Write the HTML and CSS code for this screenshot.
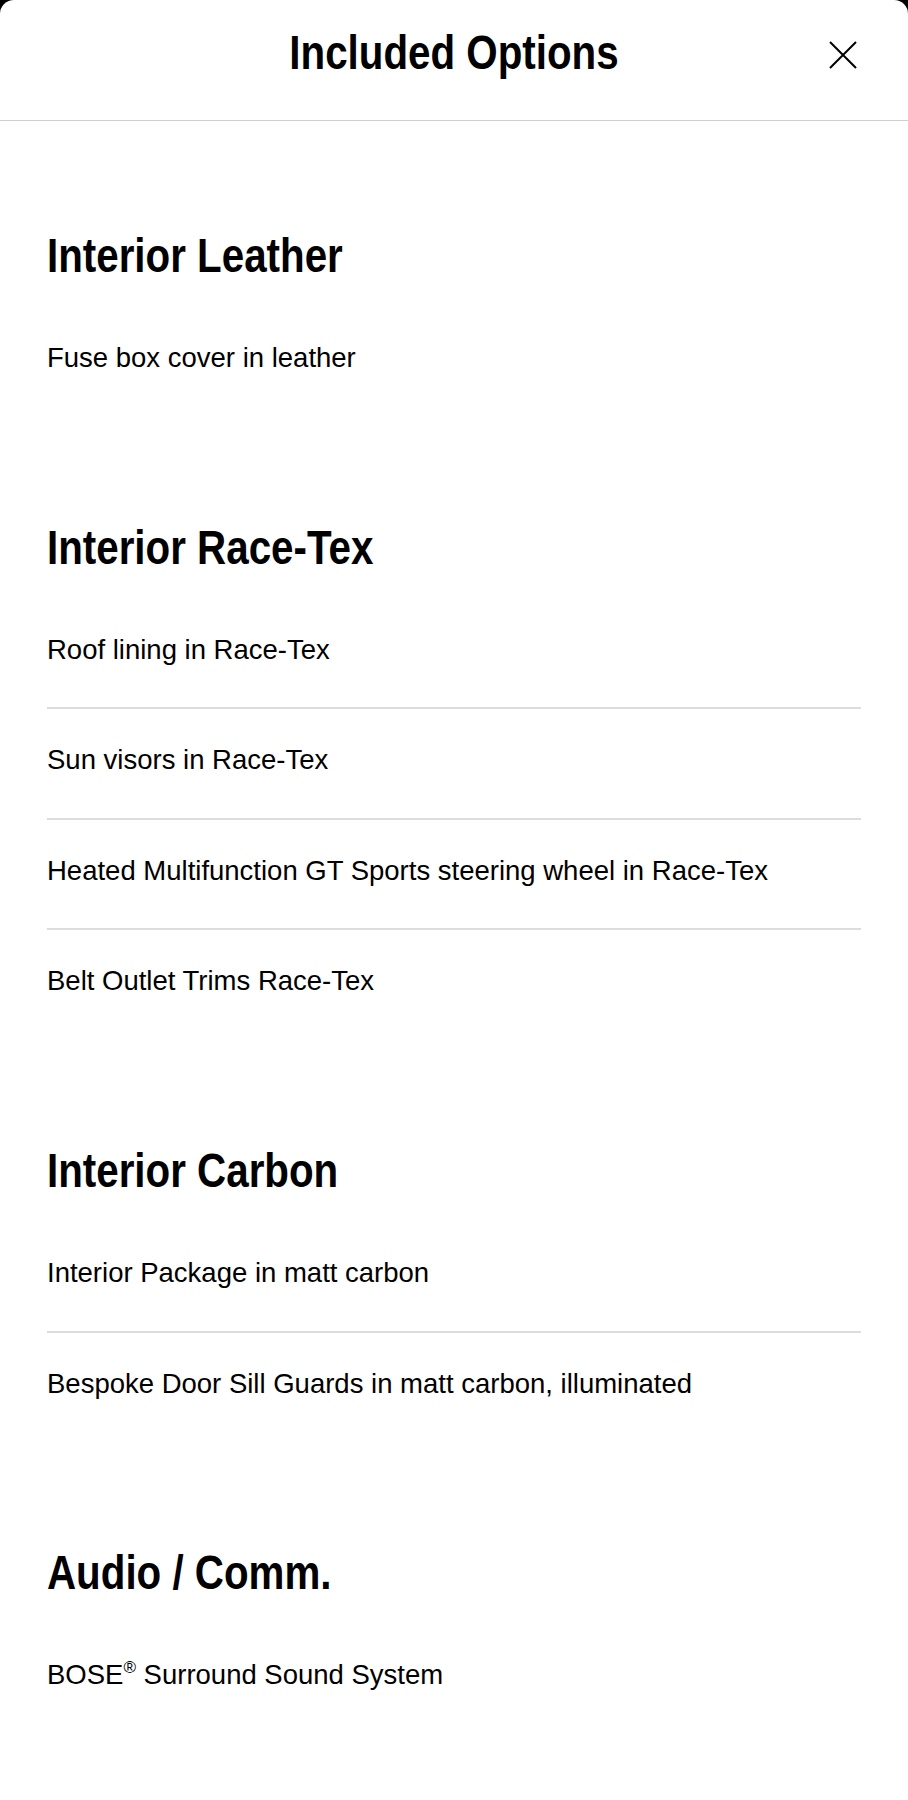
FILE: index.html
```html
<!DOCTYPE html>
<html lang="en">
<head>
<meta charset="utf-8">
<title>Included Options</title>
<link rel="stylesheet" href="styles.css">
</head>
<body>
<div class="sheet">
  <header class="sheet-header">
    <span class="spacer"></span>
    <h1 class="sheet-title"><span class="narrow narrow-center">Included Options</span></h1>
    <button class="close-btn" aria-label="Close">
      <svg width="28" height="28" viewBox="0 0 28 28" aria-hidden="true">
        <path d="M1 1 L27 27 M27 1 L1 27" stroke="#000" stroke-width="2" fill="none"/>
      </svg>
    </button>
  </header>
  <main class="content">
    <section class="group">
      <h2 class="group-title"><span class="narrow">Interior Leather</span></h2>
      <ul class="items">
        <li class="item">Fuse box cover in leather</li>
      </ul>
    </section>
    <section class="group">
      <h2 class="group-title"><span class="narrow">Interior Race-Tex</span></h2>
      <ul class="items">
        <li class="item">Roof lining in Race-Tex</li>
        <li class="item">Sun visors in Race-Tex</li>
        <li class="item">Heated Multifunction GT Sports steering wheel in Race-Tex</li>
        <li class="item">Belt Outlet Trims Race-Tex</li>
      </ul>
    </section>
    <section class="group">
      <h2 class="group-title"><span class="narrow">Interior Carbon</span></h2>
      <ul class="items">
        <li class="item">Interior Package in matt carbon</li>
        <li class="item">Bespoke Door Sill Guards in matt carbon, illuminated</li>
      </ul>
    </section>
    <section class="group">
      <h2 class="group-title"><span class="narrow">Audio / Comm.</span></h2>
      <ul class="items">
        <li class="item">BOSE<sup class="reg">®</sup> Surround Sound System</li>
      </ul>
    </section>
  </main>
</div>
</body>
</html>
```

FILE: styles.css
```css
* { box-sizing: border-box; }

html, body {
  margin: 0;
  padding: 0;
  background: #000;
}

body {
  font-family: "Liberation Sans", Arial, sans-serif;
  color: #000;
}

.sheet {
  background: #fff;
  min-height: 1800px;
  border-radius: 14px 14px 0 0;
  overflow: hidden;
}

.sheet-header {
  display: grid;
  grid-template-columns: 1fr auto 1fr;
  align-items: start;
  height: 121px;
  border-bottom: 1px solid #cfcfcf;
  padding: 0 51px;
}

.sheet-title {
  margin: 25px 0 0;
  font-family: "Liberation Sans", Arial, sans-serif;
  font-weight: 700;
  font-size: 48px;
  line-height: 56px;
  text-align: center;
}

.narrow {
  display: inline-block;
  transform: scaleX(0.84);
  transform-origin: left center;
  white-space: nowrap;
}

.narrow-center {
  transform-origin: center center;
}

.close-btn {
  justify-self: end;
  margin-top: 41px;
  width: 28px;
  height: 28px;
  padding: 0;
  border: 0;
  background: none;
  display: flex;
}

.content {
  padding: 107px 47px 80px 47px;
  display: flex;
  flex-direction: column;
  gap: 104px;
}

.group-title {
  margin: 0 0 23px;
  font-family: "Liberation Sans", Arial, sans-serif;
  font-weight: 700;
  font-size: 48px;
  line-height: 56px;
}

.items {
  list-style: none;
  margin: 0;
  padding: 0;
}

.item {
  font-size: 27.5px;
  line-height: 32px;
  padding: 35px 0 41.6px;
}

.item + .item {
  border-top: 2px solid #dcdcdc;
}

.reg {
  font-size: 17px;
  line-height: 0;
  vertical-align: 11px;
}
```
